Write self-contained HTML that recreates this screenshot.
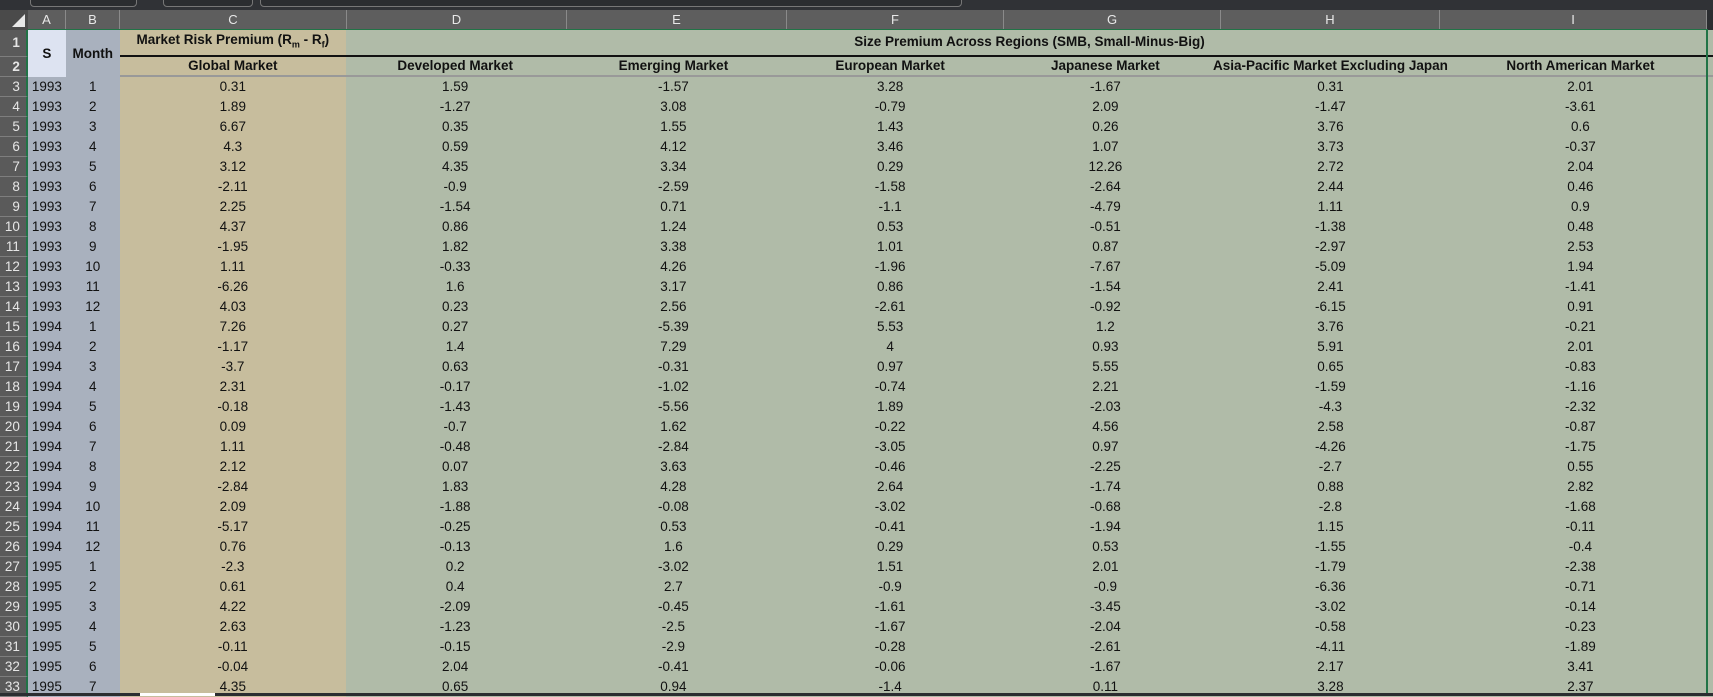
<!DOCTYPE html>
<html><head><meta charset="utf-8"><style>
body{margin:0;width:1713px;height:696px;background:#2b2d30;overflow:hidden;font-family:"Liberation Sans",sans-serif;position:relative}
#top{position:absolute;left:0;top:0;width:1713px;height:10px;background:#303236}
.tab{position:absolute;top:-4px;height:9px;border:1px solid #777;border-radius:4px;background:#2b2d30}
#hdr{position:absolute;left:0;top:10px;height:20px;width:1707px;background:#5e5e5e}
.ch{position:absolute;top:0;height:20px;line-height:20px;text-align:center;color:#e8e8e8;font-size:13px;border-right:1px solid #8a8a8a;box-sizing:border-box}
table{position:absolute;left:0;top:30px;border-collapse:separate;border-spacing:0;table-layout:fixed}
td{padding:0;height:19px;font-size:13.5px;color:#111;text-align:center;white-space:nowrap;overflow:hidden;line-height:19px;border-bottom:1px solid transparent}
td.rn{background:#5a5a5a;color:#e6e6e6;text-align:right;padding-right:6px;border-bottom:1px solid #7e7e7e;border-right:2px solid #217346}
td.a{background:#a9b1be;text-align:left;padding-left:4px;border-bottom-color:#a9b1be}
td.b{background:#a9b1be;border-bottom-color:#a9b1be}
td.c{background:#c7bd9d;border-bottom-color:#c7bd9d}
td.g{background:#b0bba8;border-bottom-color:#b0bba8}
tr.h td{font-weight:bold}
</style></head><body>
<div id="top"><div class="tab" style="left:30px;width:105px"></div><div class="tab" style="left:163px;width:88px"></div><div class="tab" style="left:260px;width:700px"></div></div>
<div id="hdr">
<div style="position:absolute;left:0;top:0;width:28px;height:20px;background:#4a4a4a"></div>
<div style="position:absolute;left:12px;top:4px;width:0;height:0;border-left:13px solid transparent;border-bottom:13px solid #e8e8e8"></div>
<div class="ch" style="left:28px;width:38px">A</div><div class="ch" style="left:66px;width:54px">B</div><div class="ch" style="left:120px;width:227px">C</div><div class="ch" style="left:347px;width:220px">D</div><div class="ch" style="left:567px;width:220px">E</div><div class="ch" style="left:787px;width:217px">F</div><div class="ch" style="left:1004px;width:217px">G</div><div class="ch" style="left:1221px;width:219px">H</div><div class="ch" style="left:1440px;width:267px">I</div>
</div>
<div style="position:absolute;left:28px;top:29px;width:1680px;height:2px;background:#217346"></div>
<table>
<colgroup><col style="width:28px"><col style="width:38px"><col style="width:54px"><col style="width:227px"><col style="width:220px"><col style="width:220px"><col style="width:217px"><col style="width:217px"><col style="width:219px"><col style="width:267px"></colgroup>
<tr class="h"><td class="rn" style="height:21px;line-height:21px">1</td><td rowspan="2" style="background:#dde3f1;text-align:center;padding:0;border:0">S</td><td rowspan="2" class="b" style="border:0">Month</td><td class="c" style="border-bottom:2px solid #111;height:20px;line-height:20px">Market Risk Premium (R<sub style="font-size:9px">m</sub> - R<sub style="font-size:9px">f</sub>)</td><td colspan="6" class="g" style="border-bottom:2px solid #111;height:20px;line-height:20px">Size Premium Across Regions (SMB, Small-Minus-Big)</td></tr>
<tr class="h"><td class="rn">2</td><td class="c" style="border-bottom:2px solid #999;height:18px;line-height:18px">Global Market</td><td class="g" style="border-bottom:2px solid #999;height:18px;line-height:18px">Developed Market</td><td class="g" style="border-bottom:2px solid #999;height:18px;line-height:18px">Emerging Market</td><td class="g" style="border-bottom:2px solid #999;height:18px;line-height:18px">European Market</td><td class="g" style="border-bottom:2px solid #999;height:18px;line-height:18px">Japanese Market</td><td class="g" style="border-bottom:2px solid #999;height:18px;line-height:18px">Asia-Pacific Market Excluding Japan</td><td class="g" style="border-bottom:2px solid #999;height:18px;line-height:18px">North American Market</td></tr>
<tr><td class="rn">3</td><td class="a">1993</td><td class="b">1</td><td class="c">0.31</td><td class="g">1.59</td><td class="g">-1.57</td><td class="g">3.28</td><td class="g">-1.67</td><td class="g">0.31</td><td class="g">2.01</td></tr>
<tr><td class="rn">4</td><td class="a">1993</td><td class="b">2</td><td class="c">1.89</td><td class="g">-1.27</td><td class="g">3.08</td><td class="g">-0.79</td><td class="g">2.09</td><td class="g">-1.47</td><td class="g">-3.61</td></tr>
<tr><td class="rn">5</td><td class="a">1993</td><td class="b">3</td><td class="c">6.67</td><td class="g">0.35</td><td class="g">1.55</td><td class="g">1.43</td><td class="g">0.26</td><td class="g">3.76</td><td class="g">0.6</td></tr>
<tr><td class="rn">6</td><td class="a">1993</td><td class="b">4</td><td class="c">4.3</td><td class="g">0.59</td><td class="g">4.12</td><td class="g">3.46</td><td class="g">1.07</td><td class="g">3.73</td><td class="g">-0.37</td></tr>
<tr><td class="rn">7</td><td class="a">1993</td><td class="b">5</td><td class="c">3.12</td><td class="g">4.35</td><td class="g">3.34</td><td class="g">0.29</td><td class="g">12.26</td><td class="g">2.72</td><td class="g">2.04</td></tr>
<tr><td class="rn">8</td><td class="a">1993</td><td class="b">6</td><td class="c">-2.11</td><td class="g">-0.9</td><td class="g">-2.59</td><td class="g">-1.58</td><td class="g">-2.64</td><td class="g">2.44</td><td class="g">0.46</td></tr>
<tr><td class="rn">9</td><td class="a">1993</td><td class="b">7</td><td class="c">2.25</td><td class="g">-1.54</td><td class="g">0.71</td><td class="g">-1.1</td><td class="g">-4.79</td><td class="g">1.11</td><td class="g">0.9</td></tr>
<tr><td class="rn">10</td><td class="a">1993</td><td class="b">8</td><td class="c">4.37</td><td class="g">0.86</td><td class="g">1.24</td><td class="g">0.53</td><td class="g">-0.51</td><td class="g">-1.38</td><td class="g">0.48</td></tr>
<tr><td class="rn">11</td><td class="a">1993</td><td class="b">9</td><td class="c">-1.95</td><td class="g">1.82</td><td class="g">3.38</td><td class="g">1.01</td><td class="g">0.87</td><td class="g">-2.97</td><td class="g">2.53</td></tr>
<tr><td class="rn">12</td><td class="a">1993</td><td class="b">10</td><td class="c">1.11</td><td class="g">-0.33</td><td class="g">4.26</td><td class="g">-1.96</td><td class="g">-7.67</td><td class="g">-5.09</td><td class="g">1.94</td></tr>
<tr><td class="rn">13</td><td class="a">1993</td><td class="b">11</td><td class="c">-6.26</td><td class="g">1.6</td><td class="g">3.17</td><td class="g">0.86</td><td class="g">-1.54</td><td class="g">2.41</td><td class="g">-1.41</td></tr>
<tr><td class="rn">14</td><td class="a">1993</td><td class="b">12</td><td class="c">4.03</td><td class="g">0.23</td><td class="g">2.56</td><td class="g">-2.61</td><td class="g">-0.92</td><td class="g">-6.15</td><td class="g">0.91</td></tr>
<tr><td class="rn">15</td><td class="a">1994</td><td class="b">1</td><td class="c">7.26</td><td class="g">0.27</td><td class="g">-5.39</td><td class="g">5.53</td><td class="g">1.2</td><td class="g">3.76</td><td class="g">-0.21</td></tr>
<tr><td class="rn">16</td><td class="a">1994</td><td class="b">2</td><td class="c">-1.17</td><td class="g">1.4</td><td class="g">7.29</td><td class="g">4</td><td class="g">0.93</td><td class="g">5.91</td><td class="g">2.01</td></tr>
<tr><td class="rn">17</td><td class="a">1994</td><td class="b">3</td><td class="c">-3.7</td><td class="g">0.63</td><td class="g">-0.31</td><td class="g">0.97</td><td class="g">5.55</td><td class="g">0.65</td><td class="g">-0.83</td></tr>
<tr><td class="rn">18</td><td class="a">1994</td><td class="b">4</td><td class="c">2.31</td><td class="g">-0.17</td><td class="g">-1.02</td><td class="g">-0.74</td><td class="g">2.21</td><td class="g">-1.59</td><td class="g">-1.16</td></tr>
<tr><td class="rn">19</td><td class="a">1994</td><td class="b">5</td><td class="c">-0.18</td><td class="g">-1.43</td><td class="g">-5.56</td><td class="g">1.89</td><td class="g">-2.03</td><td class="g">-4.3</td><td class="g">-2.32</td></tr>
<tr><td class="rn">20</td><td class="a">1994</td><td class="b">6</td><td class="c">0.09</td><td class="g">-0.7</td><td class="g">1.62</td><td class="g">-0.22</td><td class="g">4.56</td><td class="g">2.58</td><td class="g">-0.87</td></tr>
<tr><td class="rn">21</td><td class="a">1994</td><td class="b">7</td><td class="c">1.11</td><td class="g">-0.48</td><td class="g">-2.84</td><td class="g">-3.05</td><td class="g">0.97</td><td class="g">-4.26</td><td class="g">-1.75</td></tr>
<tr><td class="rn">22</td><td class="a">1994</td><td class="b">8</td><td class="c">2.12</td><td class="g">0.07</td><td class="g">3.63</td><td class="g">-0.46</td><td class="g">-2.25</td><td class="g">-2.7</td><td class="g">0.55</td></tr>
<tr><td class="rn">23</td><td class="a">1994</td><td class="b">9</td><td class="c">-2.84</td><td class="g">1.83</td><td class="g">4.28</td><td class="g">2.64</td><td class="g">-1.74</td><td class="g">0.88</td><td class="g">2.82</td></tr>
<tr><td class="rn">24</td><td class="a">1994</td><td class="b">10</td><td class="c">2.09</td><td class="g">-1.88</td><td class="g">-0.08</td><td class="g">-3.02</td><td class="g">-0.68</td><td class="g">-2.8</td><td class="g">-1.68</td></tr>
<tr><td class="rn">25</td><td class="a">1994</td><td class="b">11</td><td class="c">-5.17</td><td class="g">-0.25</td><td class="g">0.53</td><td class="g">-0.41</td><td class="g">-1.94</td><td class="g">1.15</td><td class="g">-0.11</td></tr>
<tr><td class="rn">26</td><td class="a">1994</td><td class="b">12</td><td class="c">0.76</td><td class="g">-0.13</td><td class="g">1.6</td><td class="g">0.29</td><td class="g">0.53</td><td class="g">-1.55</td><td class="g">-0.4</td></tr>
<tr><td class="rn">27</td><td class="a">1995</td><td class="b">1</td><td class="c">-2.3</td><td class="g">0.2</td><td class="g">-3.02</td><td class="g">1.51</td><td class="g">2.01</td><td class="g">-1.79</td><td class="g">-2.38</td></tr>
<tr><td class="rn">28</td><td class="a">1995</td><td class="b">2</td><td class="c">0.61</td><td class="g">0.4</td><td class="g">2.7</td><td class="g">-0.9</td><td class="g">-0.9</td><td class="g">-6.36</td><td class="g">-0.71</td></tr>
<tr><td class="rn">29</td><td class="a">1995</td><td class="b">3</td><td class="c">4.22</td><td class="g">-2.09</td><td class="g">-0.45</td><td class="g">-1.61</td><td class="g">-3.45</td><td class="g">-3.02</td><td class="g">-0.14</td></tr>
<tr><td class="rn">30</td><td class="a">1995</td><td class="b">4</td><td class="c">2.63</td><td class="g">-1.23</td><td class="g">-2.5</td><td class="g">-1.67</td><td class="g">-2.04</td><td class="g">-0.58</td><td class="g">-0.23</td></tr>
<tr><td class="rn">31</td><td class="a">1995</td><td class="b">5</td><td class="c">-0.11</td><td class="g">-0.15</td><td class="g">-2.9</td><td class="g">-0.28</td><td class="g">-2.61</td><td class="g">-4.11</td><td class="g">-1.89</td></tr>
<tr><td class="rn">32</td><td class="a">1995</td><td class="b">6</td><td class="c">-0.04</td><td class="g">2.04</td><td class="g">-0.41</td><td class="g">-0.06</td><td class="g">-1.67</td><td class="g">2.17</td><td class="g">3.41</td></tr>
<tr><td class="rn">33</td><td class="a">1995</td><td class="b">7</td><td class="c">4.35</td><td class="g">0.65</td><td class="g">0.94</td><td class="g">-1.4</td><td class="g">0.11</td><td class="g">3.28</td><td class="g">2.37</td></tr>
</table>
<div style="position:absolute;left:1706px;top:30px;width:2px;height:663px;background:#217346"></div>
<div style="position:absolute;left:0;top:693px;width:1713px;height:3px;background:#2b2d30"></div>
<div style="position:absolute;left:140px;top:693px;width:75px;height:3px;background:#fff"></div>
</body></html>
